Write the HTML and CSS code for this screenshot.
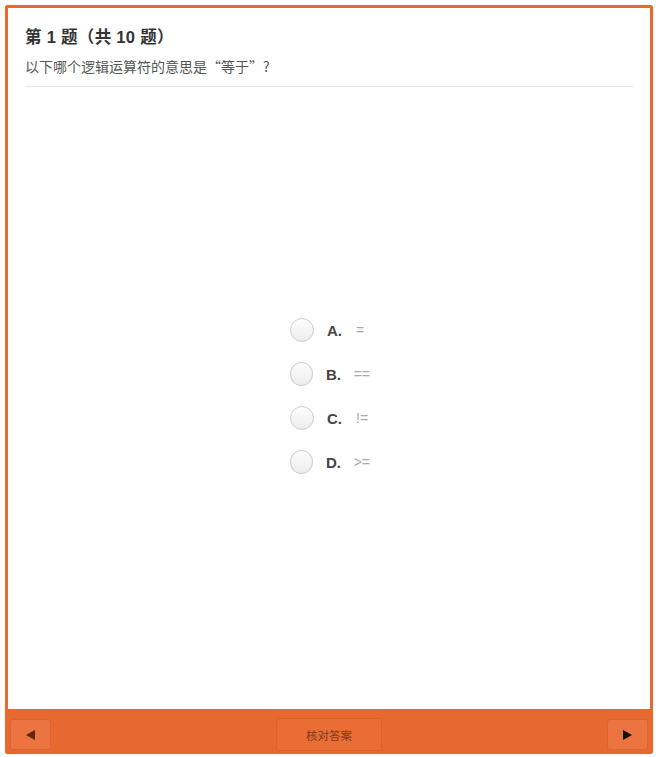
FILE: index.html
```html
<!DOCTYPE html>
<html lang="zh">
<head>
<meta charset="utf-8">
<link rel="stylesheet" href="styles.css">
</head>
<body>
<div class="frame">
  <div class="content">
    <header class="head">
      <h1 class="title">第 1 题（共 10 题）</h1>
      <p class="question">以下哪个逻辑运算符的意思是“等于”?</p>
    </header>
    <div class="options">
      <label class="opt"><span class="radio"></span><span class="key">A.</span><span class="val">=</span></label>
      <label class="opt"><span class="radio"></span><span class="key">B.</span><span class="val">==</span></label>
      <label class="opt"><span class="radio"></span><span class="key">C.</span><span class="val">!=</span></label>
      <label class="opt"><span class="radio"></span><span class="key">D.</span><span class="val">&gt;=</span></label>
    </div>
  </div>
  <footer class="bar">
    <button class="nav prev"><span class="tri-left"></span></button>
    <button class="check">核对答案</button>
    <button class="nav next"><span class="tri-right"></span></button>
  </footer>
</div>
</body>
</html>
```
FILE: styles.css
```css
html, body { margin: 0; padding: 0; background: #fff; }
body {
  padding: 5px;
  font-family: "Liberation Sans", "Noto Sans CJK SC", sans-serif;
  color: #333;
}
.frame {
  box-sizing: border-box;
  width: 648px;
  height: 749px;
  border: 3px solid #e8692f;
  border-radius: 3px;
  display: flex;
  flex-direction: column;
  background: #e8692f;
  box-shadow: 0 0 1px rgba(232,105,47,0.6);
}
.content {
  flex: 1;
  background: #fff;
  display: flex;
  flex-direction: column;
}
.head {
  margin: 0 17px 0 17px;
  padding-top: 18px;
  border-bottom: 1px solid #e8e8e8;
  padding-bottom: 10px;
}
.title {
  margin: 0;
  font-size: 16.5px;
  font-weight: bold;
  line-height: 22px;
  color: #333;
  letter-spacing: 0.3px;
}
.question {
  margin: 8px 0 0;
  font-family: "Noto Sans CJK SC", sans-serif;
  font-size: 14px;
  line-height: 20px;
  color: #555;
}
.options {
  flex: 1;
  display: flex;
  flex-direction: column;
  justify-content: center;
  align-items: center;
  gap: 20px;
  padding-left: 2px;
  padding-bottom: 4px;
}
.opt {
  display: flex;
  align-items: center;
  width: 80px;
  height: 24px;
}
.radio {
  box-sizing: border-box;
  width: 24px;
  height: 24px;
  border-radius: 50%;
  border: 1px solid #cfcfcf;
  background: linear-gradient(#fdfdfd, #ececec);
  margin-right: 13px;
}
.key {
  font-weight: bold;
  font-size: 15px;
  color: #444;
  width: 29px;
}
.val {
  font-size: 14px;
  color: #aaa;
}
.bar {
  height: 42px;
  display: flex;
  align-items: flex-end;
  justify-content: space-between;
  padding: 0 2px 0 2px;
}
button {
  font-family: inherit;
  cursor: pointer;
}
.nav {
  width: 41px;
  height: 31px;
  margin-bottom: 1px;
  border: 1px solid rgba(120,40,0,0.18);
  border-radius: 3px;
  background: #eb7440;
  display: flex;
  align-items: center;
  justify-content: center;
  padding: 0;
}
.tri-left {
  width: 0; height: 0;
  border-top: 5px solid transparent;
  border-bottom: 5px solid transparent;
  border-right: 9px solid #5b2810;
}
.tri-right {
  width: 0; height: 0;
  border-top: 5px solid transparent;
  border-bottom: 5px solid transparent;
  border-left: 9px solid #111;
}
.check {
  width: 106px;
  height: 33px;
  border: 1px solid rgba(120,40,0,0.14);
  border-radius: 3px;
  background: #ea6d35;
  color: #7a3a1c;
  font-size: 11.5px;
}
```
